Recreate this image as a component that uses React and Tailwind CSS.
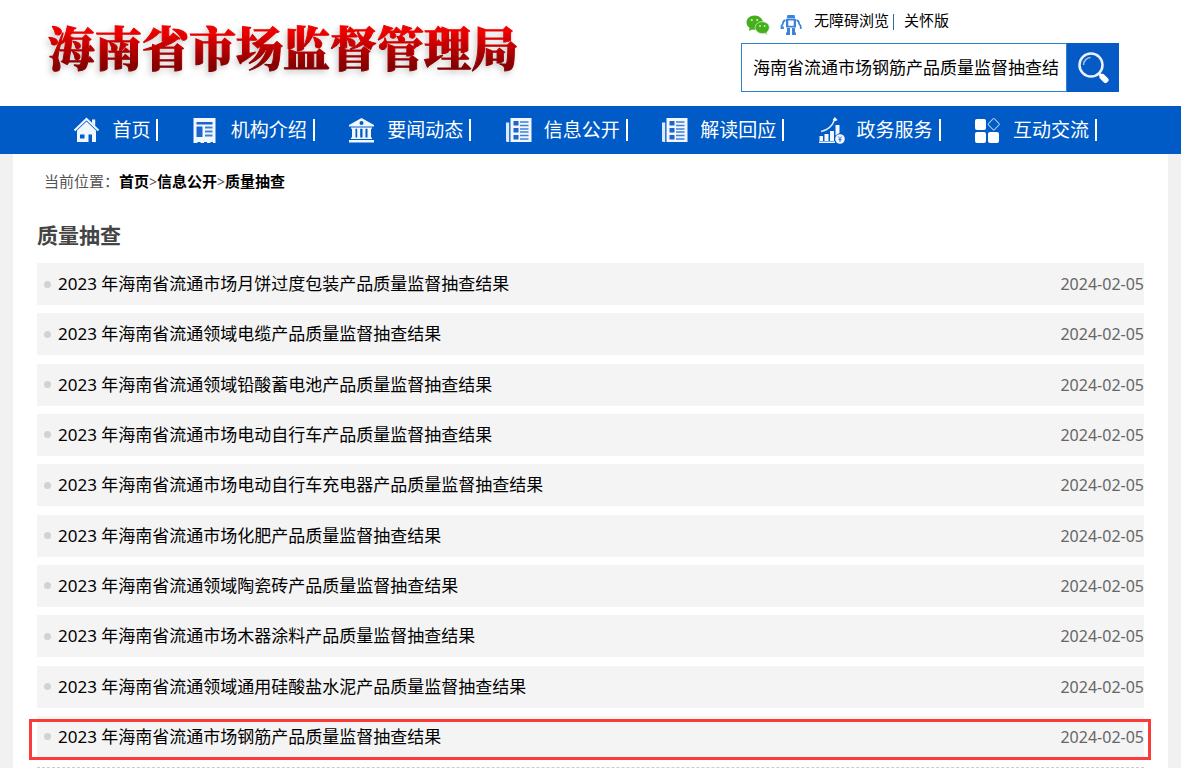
function HomeIcon() {
  return (
    <svg className="size-[27px] shrink-0" viewBox="0 1 27 27" fill="none">
      <path d="M1.5 14.5 13.5 3l12 11.5" stroke="#f2f7ff" strokeWidth="2" />
      <path d="M19 3.5h3.2V10L19 7z" fill="#f2f7ff" />
      <path
        fillRule="evenodd"
        d="M4 14.5 13.5 5.5l9.5 9V26H4zM7 18.500v4h4.500v-4zM15.500 18.500V26h3.500v-7.500z"
        fill="#f2f7ff"
      />
    </svg>
  );
}

function DocumentIcon() {
  return (
    <svg className="size-[27px] shrink-0" viewBox="0 1 27 27">
      <path
        d="M1.500 2h22v25H21v-1h-2.500v1H15v-1h-3v1H8.500v-1H5.500v1h-4z"
        fill="#f2f7ff"
      />
      <path d="M4.500 6h16v2.500h-16zM4.500 10.500h6V21h-6z" fill="#1b65cb" />
      <path
        d="M13 11.500h7.500M13 15.500h7.500M13 19.500h7.500"
        stroke="#3f80d6"
        strokeWidth="2"
      />
    </svg>
  );
}

function BankIcon() {
  return (
    <svg className="size-[27px] shrink-0" viewBox="0 1 27 27" fill="#f2f7ff">
      <path
        fillRule="evenodd"
        d="M13.500 2 26 9v1.500H1V9zM13.500 5a2 2 0 1 0 0 4 2 2 0 0 0 0-4z"
      />
      <path d="M4 12h3.500v10H4zM9.200 12h3v10h-3zM14.500 12h3v10h-3zM19.500 12H23v10h-3.500zM3 11.500h21v1.200H3zM3 21.500h21V23H3zM1 24h25v2.500H1z" />
    </svg>
  );
}

function NewsIcon() {
  return (
    <svg className="size-[27px] shrink-0" viewBox="0 1 27 27">
      <path
        d="M1 6.500h3.200V26H2.500Q1 26 1 24.500z"
        fill="#dce9fb"
      />
      <path d="M5.500 2h21v24h-21z" fill="#f2f7ff" />
      <path
        d="M8.500 5h5v4.500h-5zM8.500 12h5v4.500h-5zM8.500 19h5v4.500h-5z"
        fill="#1b65cb"
      />
      <path
        d="M15 6h8.500M15 9.500h8.500M15 13h8.500M15 16h8.500M15 19.500h8.500M15 23h8.500"
        stroke="#3f80d6"
        strokeWidth="1.500"
      />
    </svg>
  );
}

function ServiceIcon() {
  return (
    <svg className="size-[27px] shrink-0" viewBox="0 1 27 27">
      <path
        d="M1.500 20H5v5H1.500zM6.500 18h4v7h-4zM12 15h4v10h-4zM17.500 9h4v8l-4 2.500zM1 25.500h16v1.500H1z"
        fill="#f2f7ff"
      />
      <path
        d="M3 15.500Q13 13.500 16.500 4"
        fill="none"
        stroke="#dce9fb"
        strokeWidth="1.600"
      />
      <path d="m16.800 1 2.700 3-1.500 1-3.500-.8z" fill="#f2f7ff" />
      <circle cx="22" cy="23" r="4.800" fill="#f2f7ff" />
      <path
        d="m20.300 20.500 1.700 2.200 1.700-2.200M22 23v3M20.500 23.500h3"
        fill="none"
        stroke="#2a6fcf"
      />
    </svg>
  );
}

function InteractIcon() {
  return (
    <svg className="size-[27px] shrink-0" viewBox="0 1 27 27" fill="#fff">
      <rect x="1" y="3" width="11" height="11" rx="2" />
      <rect x="1" y="16" width="11" height="11" rx="2" />
      <rect x="14" y="16" width="11" height="11" rx="2" />
      <rect
        x="15.500"
        y="4"
        width="8.500"
        height="8.500"
        rx="1"
        transform="rotate(45 19.750 8.250)"
        fill="none"
        stroke="#a9c8f2"
      />
    </svg>
  );
}

function WechatIcon() {
  return (
    <svg className="h-5 w-6" viewBox="0 0 24 20">
      <path
        d="M8.500.5C4 .5.500 3.600.500 7.300c0 2.300 1.200 4.200 3 5.500L3 16l3-1.600c1 .3 2 .4 3 .4 5 0 8-3.200 8-7S13.500.5 8.500.5z"
        fill="#45b01c"
      />
      <path
        d="M16.300 6.700c-4 0-7.100 2.600-7.100 5.900s3.100 6 7.100 6c.9 0 1.700-.1 2.500-.4l2.400 1.300-.5-2.300c1.600-1.100 2.600-2.700 2.600-4.600 0-3.300-3-5.900-7-5.900z"
        fill="#45b01c"
        stroke="#d9f0d0"
        strokeWidth=".8"
      />
      <g fill="#d9f0d0">
        <circle cx="5.800" cy="5" r="1.100" />
        <circle cx="11.200" cy="5" r="1.100" />
        <circle cx="14" cy="11" r=".9" />
        <circle cx="18.700" cy="11" r=".9" />
      </g>
    </svg>
  );
}

function RobotIcon() {
  return (
    <svg className="h-5 w-[22px]" viewBox="0 0 22 20" fill="#3b82dc">
      <path d="M7.500 0h7l.8 3.500H6.700z" />
      <path
        fillRule="evenodd"
        d="M6 4h10v8.500H6zM8.300 5.500v5.200h5.400V5.500z"
      />
      <path
        d="M5.500 5.200C3.500 5.500 3 7 2.800 9L1.500 11v3M16.500 5.200c2 .3 2.500 1.800 2.700 3.800l1.500 2v3M3 11.500V14"
        fill="none"
        stroke="#3b82dc"
        strokeWidth="1.700"
      />
      <path d="M7 13h3v7H6v-2.500h1zM12 13h3v4.500h1V20h-4z" />
    </svg>
  );
}

function SearchIcon() {
  return (
    <svg className="size-8" viewBox="0 0 32 32" fill="none">
      <circle cx="14" cy="13" r="11.500" stroke="#eaf2fd" strokeWidth="2.500" />
      <path d="M6.500 13A7.500 7.500 0 0 1 13.500 5.500" stroke="#9cc0ef" strokeWidth="1.500" />
      <path d="m22 21.500 3 3" stroke="#eaf2fd" strokeWidth="3" />
      <path d="m25.500 25 3 3" stroke="#fff" strokeWidth="6" strokeLinecap="round" />
    </svg>
  );
}

const navItems = [
  { label: "首页", Icon: HomeIcon },
  { label: "机构介绍", Icon: DocumentIcon },
  { label: "要闻动态", Icon: BankIcon },
  { label: "信息公开", Icon: NewsIcon },
  { label: "解读回应", Icon: NewsIcon },
  { label: "政务服务", Icon: ServiceIcon },
  { label: "互动交流", Icon: InteractIcon },
];

const articles = [
  "2023 年海南省流通市场月饼过度包装产品质量监督抽查结果",
  "2023 年海南省流通领域电缆产品质量监督抽查结果",
  "2023 年海南省流通领域铅酸蓄电池产品质量监督抽查结果",
  "2023 年海南省流通市场电动自行车产品质量监督抽查结果",
  "2023 年海南省流通市场电动自行车充电器产品质量监督抽查结果",
  "2023 年海南省流通市场化肥产品质量监督抽查结果",
  "2023 年海南省流通领域陶瓷砖产品质量监督抽查结果",
  "2023 年海南省流通市场木器涂料产品质量监督抽查结果",
  "2023 年海南省流通领域通用硅酸盐水泥产品质量监督抽查结果",
  "2023 年海南省流通市场钢筋产品质量监督抽查结果",
];

function Header() {
  return (
    <header className="flex items-start justify-between pl-12 pr-[62px] h-[106px]">
      <h1 className="pt-3 drop-shadow-[-2px_3px_3px_rgba(0,0,0,0.2)]">
        <a
          href="#"
          className="block bg-linear-to-b from-[#ec0000] from-30% to-[#850000] to-80% bg-clip-text text-transparent [-webkit-text-stroke:1px_transparent] text-[47px] leading-[68px] font-black font-['Noto_Serif_CJK_SC','Noto_Sans_CJK_SC',serif]"
        >
          海南省市场监督管理局
        </a>
      </h1>
      <div className="w-[378px]">
        <div className="flex items-start h-[43px] pl-[5px] pt-[9px] text-[15px] leading-[22px]">
          <a href="#" aria-label="微信" className="pt-[6px]">
            <WechatIcon />
          </a>
          <a href="#" aria-label="智能机器人" className="pt-[6px] ml-[10px]">
            <RobotIcon />
          </a>
          <a href="#" className="ml-3">
            无障碍浏览
          </a>
          <span className="ml-1 mt-[5px] h-4 w-px bg-[#2a6f9f]" />
          <a href="#" className="ml-[10px]">
            关怀版
          </a>
        </div>
        <form className="flex h-[49px]" onSubmit={(e) => e.preventDefault()}>
          <input
            type="text"
            aria-label="搜索"
            defaultValue="海南省流通市场钢筋产品质量监督抽查结"
            className="min-w-0 flex-1 border border-[#2a86d0] bg-white pl-[11px] pr-1 text-[17px] outline-none"
          />
          <button
            type="submit"
            aria-label="搜索"
            className="w-[52px] shrink-0 flex items-center justify-center bg-[#055ac6]"
          >
            <SearchIcon />
          </button>
        </form>
      </div>
    </header>
  );
}

function Nav() {
  return (
    <nav className="bg-[#005bc6] pl-[2px] pr-[84px]">
      <ul className="grid grid-cols-7 h-12">
        {navItems.map(({ label, Icon }) => (
          <li key={label} className="flex items-center justify-end">
            <a
              href="#"
              className="flex items-center gap-3 text-[19px] leading-7 text-white whitespace-nowrap"
            >
              <Icon />
              {label}
            </a>
            <span className="ml-[6px] h-[22px] w-[2px] bg-white" />
          </li>
        ))}
      </ul>
    </nav>
  );
}

export default function App() {
  return (
    <div className="bg-white text-black font-['Noto_Sans','Noto_Sans_CJK_SC',sans-serif]">
      <Header />
      <Nav />
      <div className="bg-[#f1f1f1] px-[13px]">
        <main className="bg-white px-6">
          <div className="pl-[7px] pt-4 text-[15px] leading-[22px] text-[#555]">
            当前位置：
            <a href="#" className="font-bold text-black">首页</a>
            <span className="text-sm">&gt;</span>
            <a href="#" className="font-bold text-black">信息公开</a>
            <span className="text-sm">&gt;</span>
            <a href="#" className="font-bold text-black">质量抽查</a>
          </div>
          <h2 className="pt-[27px] pb-3 text-[21px] leading-[32px] font-bold text-[#444]">
            质量抽查
          </h2>
          <ul className="flex flex-col justify-between min-h-[495px]">
            {articles.map((title, i) => (
              <li
                key={title}
                className="relative flex items-center h-[42px] bg-[#f4f4f4] pl-[7px]"
              >
                <span className="size-[7px] rounded-full bg-[#d2d2d2]" />
                <a href="#" className="ml-[7px] flex-1 text-[17px] leading-6">
                  {title}
                </a>
                <time dateTime="2024-02-05" className="text-base text-[#666]">
                  2024-02-05
                </time>
                {i === articles.length - 1 && (
                  <span className="absolute -left-2 -right-[7px] top-[3px] -bottom-[2px] border-3 border-[#fb3a3a] pointer-events-none" />
                )}
              </li>
            ))}
          </ul>
          <div className="mt-[9px] border-b border-dashed border-[#ccc]" />
        </main>
      </div>
    </div>
  );
}
